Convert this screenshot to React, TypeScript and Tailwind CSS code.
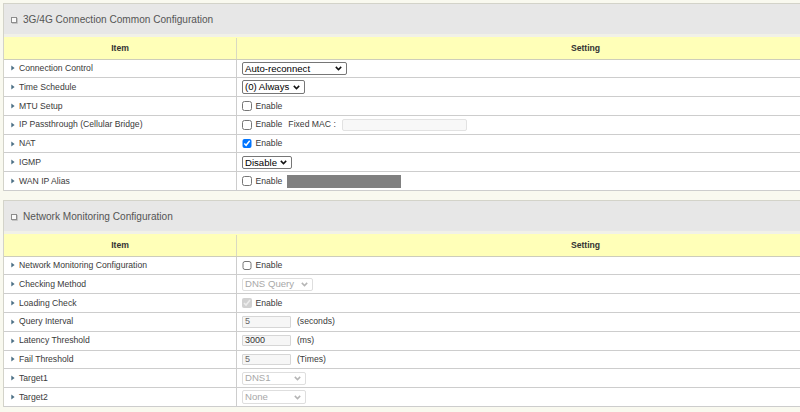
import type { ReactNode } from "react";

// small triangle in front of every row label
const Arrow = () => (
  <svg width="4" height="6" viewBox="0 0 4 6" className="shrink-0">
    <path d="M0.3 0.6L3.6 3L0.3 5.4Z" fill="#4b6f85" />
  </svg>
);

// little square before the section title
const BoxIcon = () => (
  <svg width="8" height="8" viewBox="0 0 8 8" className="shrink-0">
    <rect x="1.5" y="1.5" width="5" height="5" fill="#fafafa" stroke="#8d8d8d" strokeWidth="1" />
    <path d="M2 7.5H7.5V2" fill="none" stroke="#c4c4c4" strokeWidth="1" />
  </svg>
);

const Chevron = ({ disabled }: { disabled?: boolean }) => (
  <svg width="7" height="5" viewBox="0 0 7 5" className="shrink-0">
    <path
      d="M0.8 0.9L3.5 3.6L6.2 0.9"
      fill="none"
      stroke={disabled ? "#b5b5b5" : "#111"}
      strokeWidth="1.5"
    />
  </svg>
);

const Select = ({
  value,
  className,
  disabled,
}: {
  value: string;
  className: string;
  disabled?: boolean;
}) => (
  <div
    className={`flex h-[13.5px] items-center justify-between rounded-[2px] border pl-[2px] pr-[4px] text-[9.6px] ${
      disabled ? "border-[#dedede] bg-white text-[#a8a8a8]" : "border-[#767676] bg-white text-black"
    } ${className}`}
  >
    <span className="leading-none">{value}</span>
    <Chevron disabled={disabled} />
  </div>
);

const Check = ({ checked, disabled }: { checked?: boolean; disabled?: boolean }) => (
  <input
    type="checkbox"
    defaultChecked={checked}
    disabled={disabled}
    className="m-0 h-[9.5px] w-[9.5px] shrink-0"
  />
);

const TextBox = ({ value, dark }: { value: string; dark?: boolean }) => (
  <div
    className={`flex h-[11.5px] w-[49px] items-center rounded-[1px] border border-[#d6d6d6] bg-[#f6f6f6] pl-[2px] text-[9px] ${
      dark ? "text-[#333]" : "text-[#666]"
    }`}
  >
    {value}
  </div>
);

const Row = ({ label, children }: { label: string; children: ReactNode }) => (
  <div className="flex h-[18.8px] border-b border-[#cdcdcd]">
    <div className="flex w-[233px] shrink-0 items-center gap-[4px] border-r border-[#cdcdcd] pl-[7px] text-[8.64px] text-[#3a3a3a]">
      <Arrow />
      <span>{label}</span>
    </div>
    <div className="flex flex-1 items-center gap-[4px] pl-[5px] text-[8.64px] text-[#3a3a3a]">
      {children}
    </div>
  </div>
);

const Section = ({ title, children }: { title: string; children: ReactNode }) => (
  <div className="w-[931px] border-l border-t border-[#d3d3c9] bg-white">
    <div className="flex h-[33px] items-center gap-[5px] border-b-[3px] border-[#f1f1e8] bg-[#e7e7e7] pl-[6px] pt-[1px] text-[10.1px] text-[#555]">
      <BoxIcon />
      <span>{title}</span>
    </div>
    <div className="flex h-[22.5px] border-b border-[#cdcdbb] bg-[#ffffb8] pt-[1px] text-[8.64px] font-bold text-[#333]">
      <div className="flex w-[233px] shrink-0 items-center justify-center border-r border-[#d9d9c2]">Item</div>
      <div className="flex flex-1 items-center justify-center">Setting</div>
    </div>
    {children}
  </div>
);

export default function App() {
  return (
    <div className="h-[412px] w-full overflow-hidden bg-[#f9f9ef] pl-[3px] pt-[3px] font-['Liberation_Sans',Arial,sans-serif]">
      <Section title="3G/4G Connection Common Configuration">
        <Row label="Connection Control">
          <Select value="Auto-reconnect" className="w-[105px]" />
        </Row>
        <Row label="Time Schedule">
          <Select value="(0) Always" className="w-[63px]" />
        </Row>
        <Row label="MTU Setup">
          <Check />
          <span>Enable</span>
        </Row>
        <Row label="IP Passthrough (Cellular Bridge)">
          <Check />
          <span>Enable</span>
          <span className="ml-[2px]">Fixed MAC :</span>
          <div className="ml-[2px] h-[12.5px] w-[125px] rounded-[2px] border border-[#e2e2e2] bg-[#f8f8f8]" />
        </Row>
        <Row label="NAT">
          <Check checked />
          <span>Enable</span>
        </Row>
        <Row label="IGMP">
          <Select value="Disable" className="w-[50px]" />
        </Row>
        <Row label="WAN IP Alias">
          <Check />
          <span>Enable</span>
          <div className="ml-[1px] h-[13px] w-[114px] bg-[#808080]" />
        </Row>
      </Section>

      <div className="h-[9px]" />

      <Section title="Network Monitoring Configuration">
        <Row label="Network Monitoring Configuration">
          <Check />
          <span>Enable</span>
        </Row>
        <Row label="Checking Method">
          <Select value="DNS Query" className="w-[71px]" disabled />
        </Row>
        <Row label="Loading Check">
          <Check checked disabled />
          <span>Enable</span>
        </Row>
        <Row label="Query Interval">
          <TextBox value="5" />
          <span className="ml-[2px]">(seconds)</span>
        </Row>
        <Row label="Latency Threshold">
          <TextBox value="3000" dark />
          <span className="ml-[2px]">(ms)</span>
        </Row>
        <Row label="Fail Threshold">
          <TextBox value="5" />
          <span className="ml-[2px]">(Times)</span>
        </Row>
        <Row label="Target1">
          <Select value="DNS1" className="w-[64px]" disabled />
        </Row>
        <Row label="Target2">
          <Select value="None" className="w-[64px]" disabled />
        </Row>
      </Section>
    </div>
  );
}
